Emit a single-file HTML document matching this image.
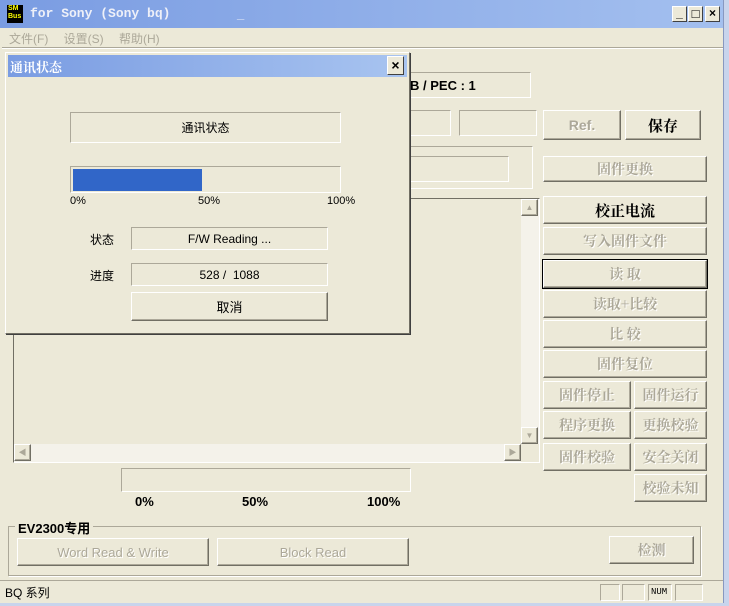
<!DOCTYPE html>
<html><head><meta charset="utf-8"><style>
*{box-sizing:border-box;margin:0;padding:0}
body{width:729px;height:606px;overflow:hidden;background:#ece9d8;font-family:"Liberation Sans","Noto Sans CJK SC",sans-serif;font-size:12px;position:relative;color:#000}
.a{position:absolute}
.sunk{position:absolute;border:1px solid;border-color:#aca899 #fff #fff #aca899}
.btn{position:absolute;background:#ece9d8;border:1px solid;border-color:#fff #716f64 #716f64 #fff;box-shadow:inset -1px -1px 0 #aca899;display:flex;align-items:center;justify-content:center;font-size:14px}
.dis{color:#aca899;text-shadow:1px 1px 0 #fff;font-family:"Noto Serif CJK SC","Liberation Sans",serif;font-weight:bold}
.bold{font-weight:bold;font-family:"Noto Serif CJK SC",serif}
.c{display:flex;align-items:center;justify-content:center}
.tb{position:absolute;width:15px;height:16px;background:#ece9d8;border:1px solid;border-color:#fff #404040 #404040 #fff;font-size:12px;font-weight:bold;line-height:13px;text-align:center}
</style></head><body>
<div class="a" style="left:0;top:0;width:729px;height:28px;background:linear-gradient(90deg,#7a9ce2,#a4c0ef)"></div>
<div class="a" style="left:7px;top:5px;width:16px;height:18px;background:#000;color:#ff0;font-size:7px;line-height:8px;font-weight:bold;padding-left:1px">SM<br>Bus</div>
<div class="a" style="left:30px;top:6px;font-family:'Liberation Mono',monospace;font-weight:bold;font-size:13px;color:#eef0f8">for Sony (Sony bq)</div>
<div class="a" style="left:237px;top:6px;color:#eef0f8;font-size:13px;font-weight:bold">_</div>
<div class="tb" style="left:672px;top:6px">_</div>
<div class="tb" style="left:688px;top:6px;font-size:13px">□</div>
<div class="tb" style="left:705px;top:6px">×</div>
<div class="a" style="left:723px;top:0;width:6px;height:606px;background:#c8d4ec;border-left:1px solid #8898c0"></div>
<div class="a" style="left:9px;top:30px;color:#aca899;font-size:12px;word-spacing:12px">文件(F) 设置(S) 帮助(H)</div>
<div class="a" style="left:2px;top:47px;width:721px;height:1px;background:#aca899"></div>
<div class="a" style="left:2px;top:48px;width:721px;height:1px;background:#fff"></div>
<div class="sunk" style="left:400px;top:72px;width:131px;height:26px;padding:5px 0 0 9px;font-weight:bold;font-family:'Liberation Sans',sans-serif;font-size:13px">B / PEC : 1</div>
<div class="sunk" style="left:400px;top:110px;width:51px;height:26px"></div>
<div class="sunk" style="left:459px;top:110px;width:78px;height:26px"></div>
<div class="btn dis" style="left:543px;top:110px;width:78px;height:30px;font-family:'Liberation Sans',sans-serif">Ref.</div>
<div class="btn bold" style="left:625px;top:110px;width:76px;height:30px;font-size:15px">保存</div>
<div class="sunk" style="left:400px;top:146px;width:133px;height:43px"></div>
<div class="sunk" style="left:400px;top:156px;width:109px;height:26px"></div>
<div class="btn dis" style="left:543px;top:156px;width:164px;height:26px">固件更换</div>
<div class="sunk" style="left:13px;top:198px;width:527px;height:265px;border-color:#716f64 #fff #fff #716f64"></div>
<div class="a" style="left:521px;top:199px;width:18px;height:245px;background:#f4f2ea"></div>
<div class="btn" style="left:521px;top:199px;width:17px;height:17px;font-size:8px;color:#aca899">▲</div>
<div class="btn" style="left:521px;top:427px;width:17px;height:17px;font-size:8px;color:#aca899">▼</div>
<div class="a" style="left:14px;top:444px;width:507px;height:18px;background:#f4f2ea"></div>
<div class="btn" style="left:14px;top:444px;width:17px;height:17px;font-size:8px;color:#aca899">◀</div>
<div class="btn" style="left:504px;top:444px;width:17px;height:17px;font-size:8px;color:#aca899">▶</div>
<div class="btn bold" style="left:543px;top:196px;width:164px;height:28px;font-size:15px">校正电流</div>
<div class="btn dis" style="left:543px;top:227px;width:164px;height:28px">写入固件文件</div>
<div class="btn dis" style="left:543px;top:260px;width:164px;height:28px;outline:1px solid #000">读 取</div>
<div class="btn dis" style="left:543px;top:290px;width:164px;height:28px">读取+比较</div>
<div class="btn dis" style="left:543px;top:320px;width:164px;height:28px">比 较</div>
<div class="btn dis" style="left:543px;top:350px;width:164px;height:28px">固件复位</div>
<div class="btn dis" style="left:543px;top:381px;width:88px;height:28px">固件停止</div>
<div class="btn dis" style="left:634px;top:381px;width:73px;height:28px">固件运行</div>
<div class="btn dis" style="left:543px;top:411px;width:88px;height:28px">程序更换</div>
<div class="btn dis" style="left:634px;top:411px;width:73px;height:28px">更换校验</div>
<div class="btn dis" style="left:543px;top:443px;width:88px;height:28px">固件校验</div>
<div class="btn dis" style="left:634px;top:443px;width:73px;height:28px">安全关闭</div>
<div class="btn dis" style="left:634px;top:474px;width:73px;height:28px">校验未知</div>
<div class="sunk" style="left:121px;top:468px;width:290px;height:24px"></div>
<div class="a" style="left:135px;top:494px;font-weight:bold;font-size:13px">0%</div>
<div class="a" style="left:242px;top:494px;font-weight:bold;font-size:13px">50%</div>
<div class="a" style="left:367px;top:494px;font-weight:bold;font-size:13px">100%</div>
<div class="a" style="left:8px;top:526px;width:693px;height:50px;border:1px solid #aca899;box-shadow:1px 1px 0 #fff"></div>
<div class="a" style="left:15px;top:518px;background:#ece9d8;padding:0 3px;font-weight:bold;font-size:13px">EV2300专用</div>
<div class="btn dis" style="left:17px;top:538px;width:192px;height:28px;font-family:'Liberation Sans',sans-serif;font-weight:normal;font-size:13px">Word Read &amp; Write</div>
<div class="btn dis" style="left:217px;top:538px;width:192px;height:28px;font-family:'Liberation Sans',sans-serif;font-weight:normal;font-size:13px">Block Read</div>
<div class="btn dis" style="left:609px;top:536px;width:85px;height:28px">检测</div>
<div class="a" style="left:0;top:580px;width:723px;height:1px;background:#aca899"></div>
<div class="a" style="left:5px;top:584px;font-size:12px">BQ 系列</div>
<div class="sunk" style="left:600px;top:584px;width:20px;height:17px"></div>
<div class="sunk" style="left:622px;top:584px;width:23px;height:17px"></div>
<div class="sunk" style="left:648px;top:584px;width:24px;height:17px;font-size:9px;font-family:'Liberation Mono',monospace;padding:2px 0 0 2px">NUM</div>
<div class="sunk" style="left:675px;top:584px;width:28px;height:17px"></div>
<div class="a" style="left:0;top:603px;width:729px;height:3px;background:#c8d4ec"></div>
<div class="a" style="left:5px;top:52px;width:405px;height:282px;background:#ece9d8;border:1px solid;border-color:#fff #716f64 #716f64 #fff;box-shadow:1px 1px 0 #404040"></div>
<div class="a" style="left:8px;top:55px;width:399px;height:22px;background:linear-gradient(90deg,#7a9ce2,#a8c4f0)"></div>
<div class="a bold" style="left:10px;top:57px;color:#fff;font-size:13px">通讯状态</div>
<div class="tb" style="left:387px;top:56px;width:17px;height:19px;font-size:14px;line-height:16px">×</div>
<div class="sunk c" style="left:70px;top:112px;width:271px;height:31px">通讯状态</div>
<div class="sunk" style="left:70px;top:166px;width:271px;height:27px"></div>
<div class="a" style="left:73px;top:169px;width:129px;height:22px;background:#3166c8"></div>
<div class="a" style="left:70px;top:195px;font-size:11px">0%</div>
<div class="a" style="left:198px;top:195px;font-size:11px">50%</div>
<div class="a" style="left:327px;top:195px;font-size:11px">100%</div>
<div class="a" style="left:90px;top:231px">状态</div>
<div class="sunk c" style="left:131px;top:227px;width:197px;height:23px">F/W Reading ...</div>
<div class="a" style="left:90px;top:267px">进度</div>
<div class="sunk c" style="left:131px;top:263px;width:197px;height:23px">528 /&nbsp; 1088</div>
<div class="btn" style="left:131px;top:292px;width:197px;height:29px;font-size:13px">取消</div>
</body></html>
